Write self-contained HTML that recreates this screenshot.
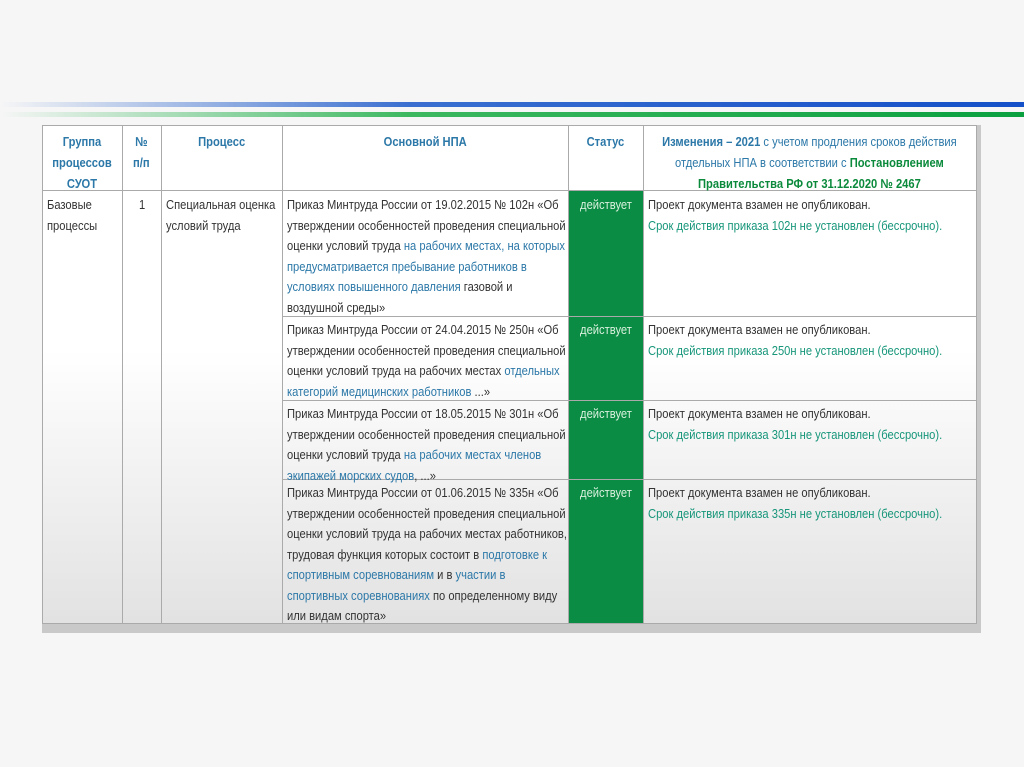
<!DOCTYPE html>
<html><head><meta charset="utf-8"><style>
body{margin:0;width:1024px;height:767px;background:#f6f6f6;position:relative;overflow:hidden;font-family:"Liberation Sans",sans-serif;font-size:13px;color:#333;}
.a{position:absolute}
.s{transform:scaleX(0.86);transform-origin:0 0;white-space:nowrap}
.bl{color:#2c78a8}.gr{color:#17967a}.gb{color:#0b8a3c;font-weight:bold}
.h{color:#2c78a8;font-weight:bold;text-align:center;line-height:21px}
.t{line-height:20.5px}
.v{background:#aaa;width:1px}
.hz{background:#aaa;height:1px}
.st{background:#0b8c44;color:#d8f0dd;text-align:center;line-height:20px}
</style></head><body>
<div class="a" style="left:0;top:102px;width:1024px;height:5px;background:linear-gradient(90deg,rgba(40,90,200,0) 0%,#3a6fd0 40%,#1450c8 100%)"></div>
<div class="a" style="left:0;top:112px;width:1024px;height:5px;background:linear-gradient(90deg,rgba(20,170,60,0) 0%,#3cb860 40%,#0aa040 100%)"></div>
<div class="a" style="left:42px;top:125px;width:939px;height:508px;background:#c9c9c9"></div>
<div class="a" style="left:43px;top:126px;width:934px;height:497px;background:linear-gradient(180deg,#fff 0%,#fff 45%,#e2e2e2 100%)"></div>
<div class="a st" style="left:569px;top:191px;width:74px;height:432px"></div>
<div class="a v" style="left:42px;top:125px;height:499px"></div>
<div class="a v" style="left:122px;top:125px;height:499px"></div>
<div class="a v" style="left:161px;top:125px;height:499px"></div>
<div class="a v" style="left:282px;top:125px;height:499px"></div>
<div class="a v" style="left:568px;top:125px;height:499px"></div>
<div class="a v" style="left:643px;top:125px;height:499px"></div>
<div class="a v" style="left:976px;top:125px;height:499px"></div>
<div class="a hz" style="left:42px;top:125px;width:935px"></div>
<div class="a hz" style="left:42px;top:190px;width:935px"></div>
<div class="a hz" style="left:282px;top:316px;width:695px"></div>
<div class="a hz" style="left:282px;top:400px;width:695px"></div>
<div class="a hz" style="left:282px;top:479px;width:695px"></div>
<div class="a hz" style="left:42px;top:623px;width:935px"></div>

<div class="a h s" style="left:42px;top:131px;width:93px">Группа<br>процессов<br>СУОТ</div>
<div class="a h s" style="left:122px;top:131px;width:45px">№<br>п/п</div>
<div class="a h s" style="left:161px;top:131px;width:141px">Процесс</div>
<div class="a h s" style="left:282px;top:131px;width:333px">Основной НПА</div>
<div class="a h s" style="left:568px;top:131px;width:87px">Статус</div>
<div class="a h s" style="left:643px;top:131px;width:387px;font-weight:normal"><b>Изменения – 2021</b> с учетом продления сроков действия<br>отдельных НПА в соответствии с <span class="gb">Постановлением</span><br><span class="gb">Правительства РФ от 31.12.2020 № 2467</span></div>

<div class="a t s" style="left:47px;top:195px">Базовые<br>процессы</div>
<div class="a t s" style="left:139px;top:195px">1</div>
<div class="a t s" style="left:166px;top:195px">Специальная оценка<br>условий труда</div>
<div class="a t s" style="left:287px;top:195px">Приказ Минтруда России от 19.02.2015 № 102н «Об<br>утверждении особенностей проведения специальной<br>оценки условий труда <span class="bl">на рабочих местах, на которых</span><br><span class="bl">предусматривается пребывание работников в</span><br><span class="bl">условиях повышенного давления</span> газовой и<br>воздушной среды»</div>
<div class="a t s" style="left:287px;top:320px">Приказ Минтруда России от 24.04.2015 № 250н «Об<br>утверждении особенностей проведения специальной<br>оценки условий труда на рабочих местах <span class="bl">отдельных</span><br><span class="bl">категорий медицинских работников</span> ...»</div>
<div class="a t s" style="left:287px;top:404px">Приказ Минтруда России от 18.05.2015 № 301н «Об<br>утверждении особенностей проведения специальной<br>оценки условий труда <span class="bl">на рабочих местах членов</span><br><span class="bl">экипажей морских судов</span>, ...»</div>
<div class="a t s" style="left:287px;top:483px">Приказ Минтруда России от 01.06.2015 № 335н «Об<br>утверждении особенностей проведения специальной<br>оценки условий труда на рабочих местах работников,<br>трудовая функция которых состоит в <span class="bl">подготовке к</span><br><span class="bl">спортивным соревнованиям</span> и в <span class="bl">участии в</span><br><span class="bl">спортивных соревнованиях</span> по определенному виду<br>или видам спорта»</div>
<div class="a st s" style="left:569px;top:195px;width:86px;background:none">действует</div>
<div class="a st s" style="left:569px;top:320px;width:86px;background:none">действует</div>
<div class="a st s" style="left:569px;top:404px;width:86px;background:none">действует</div>
<div class="a st s" style="left:569px;top:483px;width:86px;background:none">действует</div>
<div class="a t s" style="left:648px;top:195px">Проект документа взамен не опубликован.<br><span class="gr">Срок действия приказа 102н не установлен (бессрочно).</span></div>
<div class="a t s" style="left:648px;top:320px">Проект документа взамен не опубликован.<br><span class="gr">Срок действия приказа 250н не установлен (бессрочно).</span></div>
<div class="a t s" style="left:648px;top:404px">Проект документа взамен не опубликован.<br><span class="gr">Срок действия приказа 301н не установлен (бессрочно).</span></div>
<div class="a t s" style="left:648px;top:483px">Проект документа взамен не опубликован.<br><span class="gr">Срок действия приказа 335н не установлен (бессрочно).</span></div>
</body></html>
